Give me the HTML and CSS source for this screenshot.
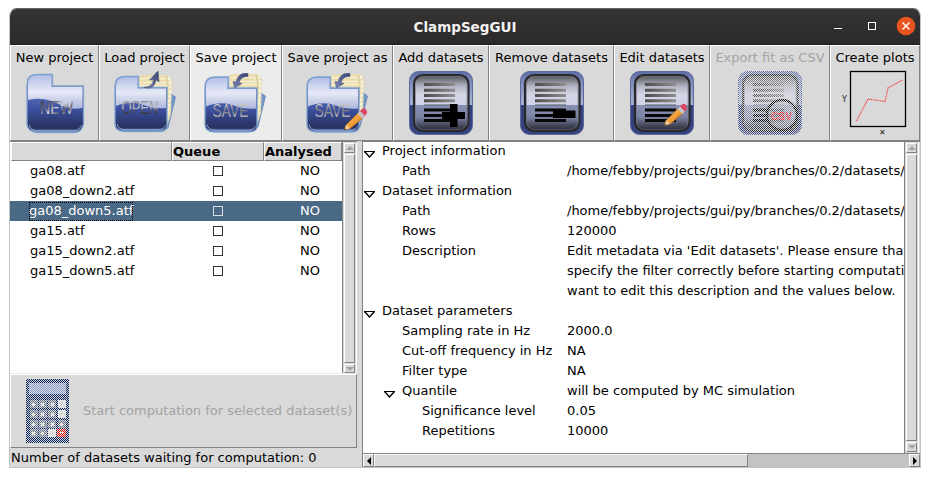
FILE: index.html
```html
<!DOCTYPE html>
<html lang="en">
<head>
<meta charset="utf-8">
<title>ClampSegGUI</title>
<link rel="stylesheet" href="styles.css">
</head>
<body>
<svg class="defs" width="0" height="0" aria-hidden="true">
  <defs>
    <linearGradient id="folderBody" x1="0" y1="0" x2="0" y2="1">
      <stop offset="0" stop-color="#93a5db"/><stop offset=".35" stop-color="#5a6db8"/><stop offset=".6" stop-color="#3c4f9f"/><stop offset=".82" stop-color="#2d3a70"/><stop offset=".93" stop-color="#28335f"/><stop offset="1" stop-color="#7c95cc"/>
    </linearGradient>
    <linearGradient id="gloss" x1="0" y1="0" x2="0" y2="1">
      <stop offset="0" stop-color="#b8c4e8"/><stop offset=".5" stop-color="#f4f5fc"/><stop offset="1" stop-color="#b9c1e0"/>
    </linearGradient>
    <linearGradient id="metal" x1="0" y1="0" x2="1" y2="1">
      <stop offset="0" stop-color="#222"/><stop offset=".35" stop-color="#777"/><stop offset=".5" stop-color="#ddd"/><stop offset=".68" stop-color="#555"/><stop offset=".8" stop-color="#ccc"/><stop offset="1" stop-color="#222"/>
    </linearGradient>
    <linearGradient id="metalDown" x1="0" y1="0" x2="0" y2="1">
      <stop offset="0" stop-color="#777"/><stop offset=".5" stop-color="#c8c8c8"/><stop offset=".62" stop-color="#555"/><stop offset="1" stop-color="#111"/>
    </linearGradient>
    <linearGradient id="metalUp" x1="0" y1="0" x2="0" y2="1">
      <stop offset="0" stop-color="#eee"/><stop offset=".5" stop-color="#777"/><stop offset=".75" stop-color="#bbb"/><stop offset="1" stop-color="#111"/>
    </linearGradient>
    <linearGradient id="frame" x1="0" y1="0" x2="0" y2="1">
      <stop offset="0" stop-color="#5c6ca5"/><stop offset=".25" stop-color="#8c98c4"/><stop offset=".53" stop-color="#a9b3d6"/><stop offset=".54" stop-color="#33417f"/><stop offset="1" stop-color="#35437f"/>
    </linearGradient>
    <linearGradient id="screen" x1="0" y1="0" x2="0" y2="1">
      <stop offset="0" stop-color="#4d4d50"/><stop offset=".2" stop-color="#b4b5c4"/><stop offset=".35" stop-color="#d4d5e4"/><stop offset=".53" stop-color="#d0d2e6"/><stop offset=".54" stop-color="#8790b4"/><stop offset=".75" stop-color="#7b83a4"/><stop offset=".9" stop-color="#45485a"/><stop offset="1" stop-color="#242530"/>
    </linearGradient>
    <linearGradient id="line" x1="0" y1="0" x2="1" y2="0">
      <stop offset="0" stop-color="#4c4c4c"/><stop offset="1" stop-color="#8f8f8f"/>
    </linearGradient>
    <linearGradient id="arrow" x1="0" y1="1" x2="1" y2="0">
      <stop offset="0" stop-color="#7c88bd"/><stop offset="1" stop-color="#39406b"/>
    </linearGradient>
    <linearGradient id="wood" x1="0" y1="0" x2="1" y2="1">
      <stop offset="0" stop-color="#ffc763"/><stop offset=".5" stop-color="#f2a03a"/><stop offset="1" stop-color="#a8600f"/>
    </linearGradient>
    <pattern id="stipple" width="2" height="2" patternUnits="userSpaceOnUse">
      <path d="M0 0h1v1H0zM1 1h1v1H1z" fill="#d9d9d9" shape-rendering="crispEdges"/>
    </pattern>
    <symbol id="pencil" viewBox="0 0 26 26" overflow="visible">
      <path d="M2 23.5 3.5 18.5 17 5l5 5L8.500 21.500z" fill="url(#wood)" stroke="#9c5f22" stroke-width=".6"/>
      <path d="M2 23.500 3.500 18.500 6 19.500 7.500 22z" fill="#f3c58e"/><path d="M1.500 24 2.200 21.800 4 23z" fill="#442"/>
      <path d="M15 7 17.500 4.500 22.500 9.500 20 12z" fill="#c3c6d0"/>
      <path d="M17.500 4.500 19.500 2.500Q21.500 1 23.500 3 25 5 24.200 7L22.500 9.500z" fill="#dc4666"/>
    </symbol>
    <symbol id="papers" viewBox="0 0 64 64">
      <path d="M58 23 62.500 26 55 57 49 60z" fill="#7396c8" stroke="#587fb4" stroke-width=".7"/>
      <path d="M24 9Q26 3.500 31 4L54 4Q59 6 59 11L58 43 53 58 46 59V17H24z" fill="#e9dcae"/>
      <path d="M27 8Q41 6 53 8M26 11.500H54M26 14.500H55" stroke="#f7efcf" stroke-width="1.300" fill="none"/>
      <path d="M55.500 6Q58 12 57 22T55 42L52 57" stroke="#f8f5e8" stroke-width="2" stroke-dasharray="3 1.500" fill="none"/>
      <path d="M53.500 5 Q55 15 54.500 28" stroke="#cfc18c" stroke-width=".7" fill="none"/>
    </symbol>
    <symbol id="folder" viewBox="0 0 64 64">
      <path d="M1 15Q1 5.500 11 5.500H24.500V16.500H53V56Q52 60.500 45 60.500H10Q1 60 1 53z" fill="url(#folderBody)" stroke="#7da3ce" stroke-width="1.300"/>
      <path d="M2 15Q2 6.500 11 6.500H23.500V17.500H52V37Q42 38 34 35.500C24 31 14 30 2 35z" fill="url(#gloss)" fill-opacity=".9"/>
      <path d="M3 53Q4 58.500 11 58.700H44Q50 58.500 51.500 54.500" fill="none" stroke="#8fa8d8" stroke-width="1"/>
    </symbol>
    <symbol id="document" viewBox="0 0 64 64">
      <rect x=".5" y=".5" width="63" height="63" rx="9" fill="url(#frame)" stroke="#5c699a"/>
      <rect x="5" y="4" width="54.500" height="56" rx="9" fill="url(#screen)" stroke="#28292d" stroke-width="2.200"/>
      <rect x="6.500" y="5.500" width="51.500" height="53" rx="8" fill="none" stroke="#777984" stroke-width=".8" opacity=".7"/>
      <path d="M15 12h31v3H15zM15 17.700h31v3H15zM15 23h31v3H15zM15 28.300h31v3H15z" fill="url(#line)"/>
      <path d="M15 34H46" stroke="#555866" stroke-width="1"/>
      <path d="M15 37.500h31v3H15zM15 43h31v3H15zM15 48h31v3H15z" fill="#08080a"/>
    </symbol>
  </defs>
</svg>

<div class="window">
  <header class="titlebar">
    <span class="title">ClampSegGUI</span>
    <svg class="controls" width="100" height="36" viewBox="0 0 100 36">
      <path d="M10 19.500h8" stroke="#fff"/>
      <rect x="44.500" y="13.500" width="7" height="7" fill="none" stroke="#fff"/>
      <circle cx="82" cy="17" r="9.300" fill="#e95420"/>
      <path d="M78.500 13.500l7 7m0-7l-7 7" stroke="#fff" stroke-width="1.400"/>
    </svg>
  </header>

  <nav class="toolbar">
    <button class="tool"><span>New project</span>
      <svg width="64" height="64" viewBox="0 0 64 64">
        <path d="M4 13Q4 3.500 14 3.500H29.500V15H60.500V53Q59 61.500 51 61.500H14Q4 60 4 53z" fill="url(#folderBody)" stroke="#7da3ce" stroke-width="1.300"/>
        <path d="M5 13Q5 4.500 14 4.500H28.500V16H59.500V37Q49 39 41 35.500C28 29 19 26 5 29z" fill="url(#gloss)" fill-opacity=".9"/>
        <path d="M6 54Q8 59.500 14 59.700H51Q56 59.500 58.500 54.500" fill="none" stroke="#8fa8d8"/>
        <text class="engraved" x="17" y="43" textLength="33" lengthAdjust="spacingAndGlyphs" fill="url(#metal)">NEW</text>
      </svg></button>
    <button class="tool"><span>Load project</span>
      <svg width="64" height="64" viewBox="0 0 64 64">
        <use href="#papers"/><use href="#folder" x="1"/>
        <path d="M31 16.500Q40 15.500 40.500 8.500L36.500 9 45 0 46 11 43 8.800Q42 17 35 17z" fill="url(#arrow)" stroke="#3c446f" stroke-width=".5"/>
        <text class="engraved" x="8.500" y="43" textLength="37" lengthAdjust="spacingAndGlyphs" fill="url(#metalDown)">OPEN</text>
      </svg></button>
    <button class="tool tool-active"><span>Save project</span>
      <svg width="64" height="64" viewBox="0 0 64 64">
        <use href="#papers" x="-1" y="-1"/><use href="#folder" y="0.500"/>
        <path d="M44 2.500Q34 1 32 11L29 10.500 30.500 17 38 12.500 35 11.500Q37 5 44 5.500z" fill="url(#arrow)" stroke="#48517f" stroke-width=".5"/>
        <text class="engraved" x="8.500" y="46" textLength="36" lengthAdjust="spacingAndGlyphs" fill="url(#metalUp)">SAVE</text>
      </svg></button>
    <button class="tool"><span>Save project as</span>
      <svg width="64" height="64" viewBox="0 0 64 64">
        <use href="#papers" x="-1" y="-1"/><use href="#folder" y="0.500"/>
        <path d="M44 2.500Q34 1 32 11L29 10.500 30.500 17 38 12.500 35 11.500Q37 5 44 5.500z" fill="url(#arrow)" stroke="#48517f" stroke-width=".5"/>
        <text class="engraved" x="8.500" y="46" textLength="36" lengthAdjust="spacingAndGlyphs" fill="url(#metalUp)">SAVE</text>
        <use href="#pencil" x="36.500" y="35.500" width="26" height="26"/>
      </svg></button>
    <button class="tool"><span>Add datasets</span>
      <svg width="64" height="64" viewBox="0 0 64 64"><use href="#document"/><path d="M41 33h7.500v8H56v7h-7.500v8H41v-8h-8v-7h8z" fill="#000"/></svg></button>
    <button class="tool"><span>Remove datasets</span>
      <svg width="64" height="64" viewBox="0 0 64 64"><use href="#document"/><path d="M33 39.500h22.500v7.500H33z" fill="#000"/></svg></button>
    <button class="tool"><span>Edit datasets</span>
      <svg width="64" height="64" viewBox="0 0 64 64"><use href="#document"/><use href="#pencil" x="32.500" y="31" width="26" height="26"/></svg></button>
    <button class="tool" disabled><span>Export fit as CSV</span>
      <svg width="64" height="64" viewBox="0 0 64 64"><use href="#document"/>
        <circle cx="44" cy="44" r="15" fill="#a4a8bb" fill-opacity=".5" stroke="#000" stroke-width="2.400"/>
        <text class="csv" x="33" y="48.500" textLength="21" lengthAdjust="spacingAndGlyphs">CSV</text>
        <rect width="64" height="64" fill="url(#stipple)"/></svg></button>
    <button class="tool"><span>Create plots</span>
      <svg width="64" height="66" viewBox="0 0 64 66">
        <rect x="7.500" y=".5" width="55" height="55" fill="none" stroke="#000" stroke-width="1.300"/>
        <path d="M13.500 50 25 28 42 30.500 45 17 59.500 9" fill="none" stroke="#f05050" stroke-width="1.200" stroke-dasharray="1.500 .8"/>
        <text class="axis" x="-1" y="31">Y</text><text class="axis" x="36" y="64">✕</text>
      </svg></button>
  </nav>

  <main class="content">
    <section class="left">
      <div class="list">
        <div class="table">
          <div class="row head"><span></span><span>Queue</span><span>Analysed</span></div>
          <div class="row"><span class="name">ga08.atf</span><i class="box"></i><span>NO</span></div>
          <div class="row"><span class="name">ga08_down2.atf</span><i class="box"></i><span>NO</span></div>
          <div class="row selected"><span class="name"><b class="focus">ga08_down5.atf</b></span><i class="box"></i><span>NO</span></div>
          <div class="row"><span class="name">ga15.atf</span><i class="box"></i><span>NO</span></div>
          <div class="row"><span class="name">ga15_down2.atf</span><i class="box"></i><span>NO</span></div>
          <div class="row"><span class="name">ga15_down5.atf</span><i class="box"></i><span>NO</span></div>
        </div>
        <div class="vscroll">
          <span class="step"><svg width="8" height="4"><path d="M0 4 4 0 8 4z" fill="#a3a3a3"/></svg></span>
          <span class="thumb"></span>
          <span class="step"><svg width="8" height="4"><path d="M0 0h8L4 4z" fill="#a3a3a3"/></svg></span>
        </div>
      </div>
      <button class="start" disabled>
        <svg width="43" height="64" viewBox="0 0 43 64">
          <rect width="43" height="64" fill="#001d55"/>
          <rect x="3" y="4" width="37" height="11" fill="#8a9cce"/>
          <path d="M4 21h8v8H4zM13 21h8v8h-8zM22 21h8v8h-8zM4 31h8v8H4zM13 31h8v8h-8zM22 31h8v8h-8zM4 41h8v8H4zM13 41h8v8h-8zM22 41h8v8h-8zM32 41h8v8h-8zM4 50h8v8H4zM13 50h8v8h-8z" fill="#66718a"/>
          <path d="M6 24h3v3H6zM15 24h3v3h-3zM25 24h3v3h-3zM6 34h3v3H6zM15 34h3v3h-3zM25 34h3v3h-3zM6 44h3v3H6zM15 44h3v3h-3zM25 44h3v3h-3zM34 44h3v3h-3zM6 53h3v3H6zM15 53h3v3h-3z" fill="#eee"/>
          <path d="M32 21h8v8h-8zM32 31h8v8h-8zM22 50h8v8h-8z" fill="#e9e9e9"/>
          <path d="M31 50h9v8h-9z" fill="#f00"/><path d="M33 53.500h5" stroke="#fff"/>
          <rect width="43" height="64" fill="url(#stipple)"/>
          <path d="M35 25h1v1h-1zM35 34h1v1h-1zM26 54h1v1h-1z" fill="#999"/>
        </svg>
        <span>Start computation for selected dataset(s)</span>
      </button>
      <footer class="status">Number of datasets waiting for computation: 0</footer>
    </section>

    <section class="details">
      <div class="tree">
        <dl>
          <div class="item open"><dt>Project information</dt><dd></dd></div>
          <div class="item l1"><dt>Path</dt><dd>/home/febby/projects/gui/py/branches/0.2/datasets/e</dd></div>
          <div class="item open"><dt>Dataset information</dt><dd></dd></div>
          <div class="item l1"><dt>Path</dt><dd>/home/febby/projects/gui/py/branches/0.2/datasets/a</dd></div>
          <div class="item l1"><dt>Rows</dt><dd>120000</dd></div>
          <div class="item l1"><dt>Description</dt><dd>Edit metadata via 'Edit datasets'. Please ensure that<br>specify the filter correctly before starting computati<br>want to edit this description and the values below.</dd></div>
          <div class="item open"><dt>Dataset parameters</dt><dd></dd></div>
          <div class="item l1"><dt>Sampling rate in Hz</dt><dd>2000.0</dd></div>
          <div class="item l1"><dt>Cut-off frequency in Hz</dt><dd>NA</dd></div>
          <div class="item l1"><dt>Filter type</dt><dd>NA</dd></div>
          <div class="item l1 open"><dt>Quantile</dt><dd>will be computed by MC simulation</dd></div>
          <div class="item l2"><dt>Significance level</dt><dd>0.05</dd></div>
          <div class="item l2"><dt>Repetitions</dt><dd>10000</dd></div>
        </dl>
      </div>
      <div class="vscroll">
        <span class="step"><svg width="8" height="4"><path d="M0 4 4 0 8 4z" fill="#a3a3a3"/></svg></span>
        <span class="thumb"></span>
        <span class="step"><svg width="8" height="4"><path d="M0 0h8L4 4z" fill="#a3a3a3"/></svg></span>
      </div>
      <div class="hscroll">
        <span class="step"><svg width="4" height="8"><path d="M4 0v8L0 4z"/></svg></span>
        <span class="thumb"></span>
        <span class="step"><svg width="4" height="8"><path d="M0 0v8l4-4z"/></svg></span>
      </div>
    </section>
  </main>
</div>
</body>
</html>
```
FILE: styles.css
```css
* { box-sizing: border-box; }
body {
  margin: 0;
  padding: 8px 9px;
  background: #fff;
  color: #000;
  font: 13px/20px "DejaVu Sans", sans-serif;
  overflow: hidden;
}
.defs { display: block; height: 0; }
.window {
  width: 912px;
  height: 460px;
  border: 1px solid #c3c3c3;
  border-top-color: #666;
  border-radius: 8px 8px 0 0;
  overflow: hidden;
  background: #d9d9d9;
}
.titlebar {
  display: grid;
  grid-template-columns: 96px 1fr 96px;
  height: 36px;
  background: linear-gradient(#353432, #2b292a);
  border-bottom: 1px solid #1f1d1d;
}
.title {
  grid-column: 2;
  text-align: center;
  line-height: 36px;
  color: #f2f1ef;
  font: bold 13.5px/36px "DejaVu Sans", sans-serif;
}
.controls { display: block; }
.toolbar {
  display: grid;
  grid-template-columns: 89px 91px 92px 111px 96px 125px 96px 120px 90px;
  height: 96px;
}
button { font: inherit; color: inherit; background: #d9d9d9; border-radius: 0; }
button:disabled { color: #a3a3a3; }
.tool {
  display: flex;
  flex-direction: column;
  align-items: center;
  padding: 2px 0 0;
  border: 1px solid;
  border-color: #fff #828282 #828282 #fff;
  white-space: nowrap;
  overflow: hidden;
}
.tool span { height: 23px; }
.tool svg { flex: none; overflow: visible; }
.tool-active { background: #ececec; }
.engraved { font: 17.500px "Liberation Sans", sans-serif; }
.csv { font: bold 11px "Liberation Sans", sans-serif; fill: #f00; }
.axis { font: 8px "DejaVu Sans", sans-serif; fill: #222; }

.content { display: grid; grid-template-columns: 352px 558px; height: 326px; }
.left { display: flex; flex-direction: column; padding-right: 5px; }
.list { display: flex; height: 233px; border-top: 1px solid #828282; border-bottom: 1px solid #ececec; }
.table { width: 333px; background: #fff; border-right: 1px solid #828282; }
.row { display: grid; grid-template-columns: 162px 92px 78px; height: 20px; align-items: center; }
.row > span:last-child { text-align: center; padding-left: 14px; }
.name { padding-left: 20px; }
.head { height: 19px; font-weight: bold; padding-left: 1px; grid-template-columns: 161px 92px 78px; }
.head > span, .head > span:last-child {
  height: 19px;
  line-height: 18px;
  text-align: left;
  padding: 0 0 0 0;
  background: #d9d9d9;
  border: 1px solid;
  border-color: #fff #828282 #828282 #fff;
}
.selected { background: #4a6984; color: #fff; }
.focus { display: inline-block; height: 19px; line-height: 17px; margin-left: -1px; font-weight: normal; outline: 1px dotted #000; outline-offset: -1px; }
.box { width: 10px; height: 10px; border: 1px solid #333; margin-left: 41px; }
.selected .box { border-color: #d5dde4; }
.step, .thumb {
  display: flex;
  align-items: center;
  justify-content: center;
  background: #d9d9d9;
  border: 1px solid;
  border-color: #fff #828282 #828282 #fff;
}
.vscroll { display: grid; grid-template-rows: 10px 1fr 10px; gap: 1px; width: 14px; padding: 1px; background: #d9d9d9; border-right: 1px solid #fff; }
.list .vscroll { grid-template-rows: 10px 209px 9px; }
.start {
  display: flex;
  align-items: center;
  gap: 14px;
  height: 74px;
  padding: 0 0 0 15px;
  border: 1px solid;
  border-color: #fff #828282 #828282 #fff;
  white-space: nowrap;
}
.status { line-height: 19px; padding-left: 1px; white-space: nowrap; }

.details {
  display: grid;
  grid-template: 311px 14px / 542px 15px;
  border-left: 1px solid #828282;
  border-top: 1px solid #828282;
}
.tree { background: #fff; border-right: 1px solid #828282; overflow: hidden; }
dl, dt, dd { margin: 0; }
dl { margin-top: -1px; }
.item { display: grid; grid-template-columns: 204px 800px; white-space: nowrap; }
.item dt { padding-left: 19px; }
.l1 dt { padding-left: 39px; }
.l2 dt { padding-left: 59px; }
.open dt::before {
  content: "";
  float: left;
  width: 11px;
  height: 7px;
  margin: 10px 7px 0 -18px;
  background: #000;
  clip-path: polygon(0 0, 100% 0, 100% 1px, 5.5px 100%, 0 1px, 0 0, 2px 1px, 5.5px 5px, 9px 1px, 2px 1px);
}
.hscroll {
  grid-column: 1 / 3;
  display: grid;
  grid-template-columns: 11px 374px 11px;
  justify-content: start;
  background: #c3c3c3;
  border-top: 1px solid #828282;
}
.hscroll .step:last-child { margin-left: 161px; width: 11px; }
```
